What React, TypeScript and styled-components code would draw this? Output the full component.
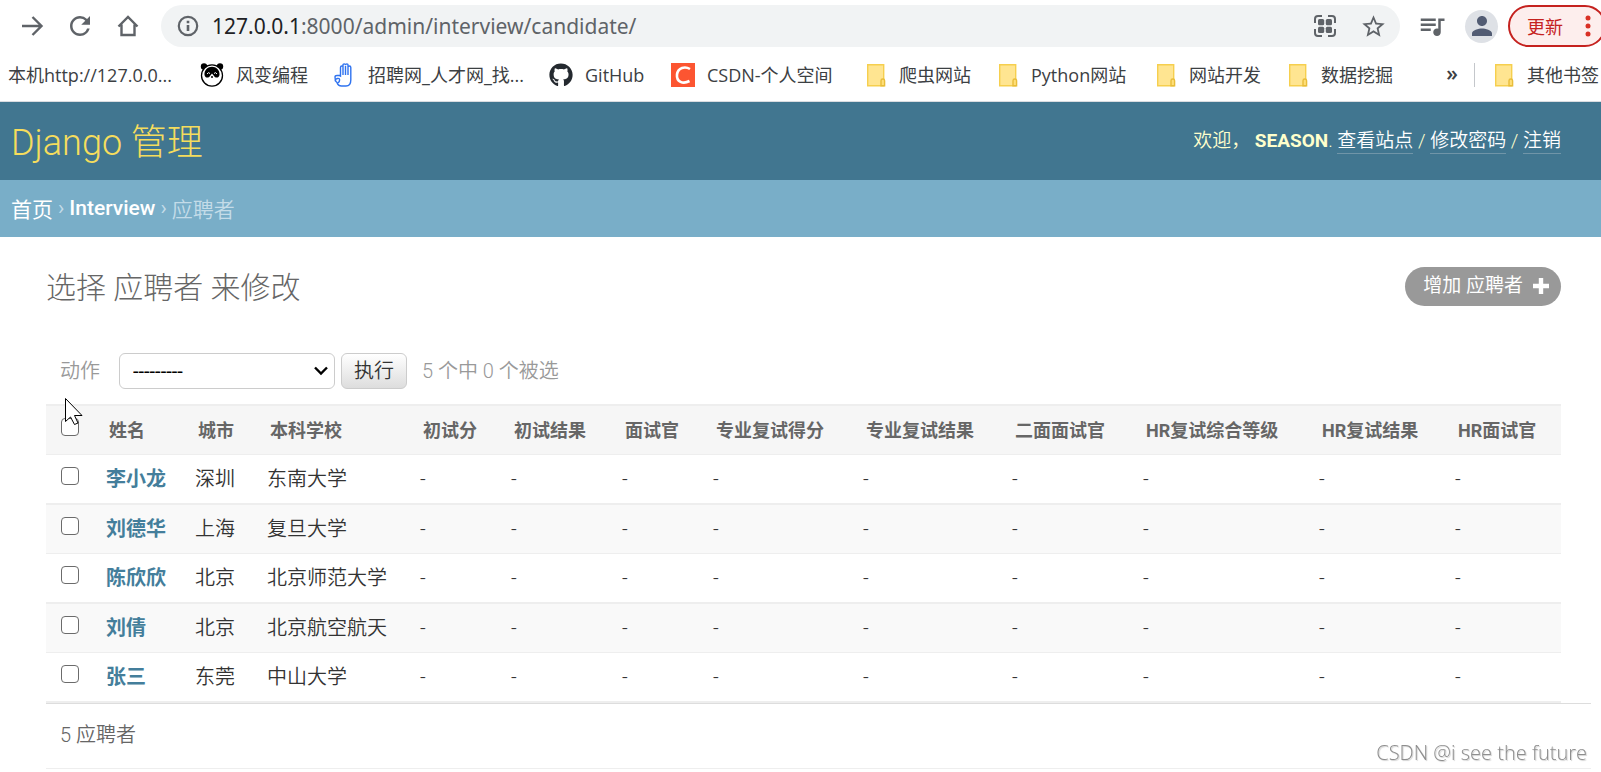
import React from "react";
import styled, { createGlobalStyle } from "styled-components";
import { FaGithub } from "react-icons/fa";
import { MdPerson, MdQueueMusic, MdRefresh, MdStarBorder } from "react-icons/md";

const uiFont = `"Open Sans", "Noto Sans CJK SC", sans-serif`;
const adminFont = `Roboto, "Noto Sans CJK SC", sans-serif`;

const GlobalStyle = createGlobalStyle`
  * { box-sizing: border-box; }
  body { margin: 0; background: #fff; overflow-x: hidden; }
`;

const Page = styled.div`
  position: relative;
  font-family: ${adminFont};
  color: #333;
`;

/* ---------- browser bars ---------- */

const Browser = styled.div`
  display: flex;
  flex-direction: column;
  overflow: hidden;
  padding-top: 5px;
  height: 102px;
  border-bottom: 1px solid #dadce0;
  font-family: ${uiFont};
`;

const Toolbar = styled.div`
  display: flex;
  align-items: center;
  height: 42px;
  color: #5f6368;
`;

const NavButtons = styled.div`
  display: flex;
  gap: 18px;
  padding: 0 18px 0 17px;
`;

const IconButton = styled.button`
  display: flex;
  align-items: center;
  justify-content: center;
  flex: none;
  width: 30px;
  height: 30px;
  padding: 0;
  border: 0;
  background: none;
  color: inherit;
`;

const MediaButton = styled(IconButton)`
  margin: 0 18px 0 17px;
`;

const Omnibox = styled.div`
  display: flex;
  align-items: center;
  flex: 1;
  height: 42px;
  padding: 0 12px;
  border-radius: 21px;
  background: #f1f3f4;
`;

const Address = styled.div`
  flex: 1;
  margin-left: 9px;
  font-family: "Noto Sans", sans-serif;
  font-size: 21px;
  line-height: 28px;
  white-space: nowrap;
  color: #5f6368;
`;

const Host = styled.span`
  color: #202124;
`;

const OmniboxActions = styled.div`
  display: flex;
  gap: 18px;
`;

const Avatar = styled.button`
  display: flex;
  align-items: center;
  justify-content: center;
  flex: none;
  width: 33px;
  height: 33px;
  margin-right: 10px;
  padding: 0;
  border: 0;
  border-radius: 50%;
  background: #dee1e6;
  color: #525c73;
`;

const UpdateButton = styled.button`
  display: flex;
  align-items: center;
  justify-content: space-between;
  flex: none;
  width: 98px;
  height: 42px;
  margin-right: -5px;
  padding: 0 13px 0 17px;
  border: 2px solid #c5221f;
  border-radius: 21px;
  background: #fdeeed;
  color: #c5221f;
  font-family: ${uiFont};
  font-size: 18px;
`;

const Bookmarks = styled.nav`
  display: flex;
  align-items: center;
  flex: 1;
  gap: 24px;
  padding: 2px 0 0 8px;
  color: #3c4043;
`;

const Bookmark = styled.a<{ $label: number }>`
  display: grid;
  grid-template-columns: ${(p) => (p.$label ? `24px ${p.$label}px` : "168px")};
  align-items: center;
  column-gap: 12px;
  flex: none;
  font-size: 18px;
  line-height: 24px;
  white-space: nowrap;
  color: inherit;
  text-decoration: none;
`;

const OtherBookmarks = styled.div`
  display: flex;
  align-items: center;
  flex: none;
  gap: 16px;
  margin: 0 2px 0 auto;
`;

const MoreButton = styled.button`
  padding: 0 0 4px;
  border: 0;
  background: none;
  color: inherit;
  font-family: ${uiFont};
  font-size: 21px;
  font-weight: 600;
  line-height: 24px;
`;

const Divider = styled.span`
  width: 1px;
  height: 24px;
  background: #c4c7cb;
`;

/* ---------- admin header ---------- */

const Header = styled.header`
  display: flex;
  align-items: center;
  justify-content: space-between;
  height: 78px;
  padding: 0 40px 0 11px;
  background: #417690;
  color: #ffc;
`;

const SiteName = styled.h1`
  margin: 0;
  padding-top: 4px;
  font-size: 36px;
  font-weight: 300;
  line-height: 42px;
`;

const SiteLink = styled.a`
  color: #f5dd5d;
  text-decoration: none;
`;

const UserTools = styled.div`
  font-size: 19px;
  line-height: 24px;
  font-weight: 350;
  white-space: pre;
`;

const UserName = styled.strong`
  font-weight: 700;
`;

const ToolLink = styled.a`
  display: inline-block;
  border-bottom: 1px solid #7095a8;
  color: #fff;
  text-decoration: none;
`;

const Breadcrumbs = styled.nav`
  display: flex;
  align-items: center;
  gap: 5px;
  height: 57px;
  padding: 0 11px 2px;
  background: #79aec8;
  color: #c4dce8;
  font-size: 21px;
  font-weight: 350;
`;

const Crumb = styled.a`
  color: #fff;
  font-weight: 400;
  text-decoration: none;
`;

const AppCrumb = styled(Crumb)`
  font-weight: 500;
`;

const CrumbMark = styled.span`
  font-weight: 400;
`;

/* ---------- change list ---------- */

const Content = styled.main`
  padding: 30px 40px 0 46px;
`;

const TitleRow = styled.div`
  display: flex;
  align-items: center;
  justify-content: space-between;
  height: 39px;
  margin-bottom: 47px;
`;

const Title = styled.h2`
  margin: 0;
  padding-top: 2px;
  font-size: 30px;
  font-weight: 300;
  line-height: 36px;
  color: #666;
`;

const AddLink = styled.a`
  display: flex;
  align-items: center;
  justify-content: space-between;
  gap: 10px;
  height: 39px;
  padding: 0 12px 2px 18px;
  border-radius: 20px;
  background: #999;
  color: #fff;
  font-size: 19px;
  line-height: 24px;
  text-decoration: none;
`;

const Actions = styled.form`
  display: flex;
  align-items: center;
  height: 36px;
  margin-bottom: 15px;
  padding-left: 14px;
  font-size: 20px;
  font-weight: 350;
  color: #999;
`;

const ActionLabel = styled.label`
  width: 59px;
  padding-bottom: 4px;
`;

const SelectWrap = styled.div`
  display: grid;
  align-items: center;
  width: 216px;
  height: 36px;
  margin-right: 6px;

  & > * { grid-area: 1 / 1; }
  & > svg { justify-self: end; margin-right: 7px; pointer-events: none; }
`;

const Select = styled.select`
  appearance: none;
  width: 100%;
  height: 36px;
  padding: 0 30px 0 13px;
  border: 1px solid #ccc;
  border-radius: 6px;
  background: #fff;
  color: #000;
  font-family: ${adminFont};
  font-size: 20px;
`;

const RunButton = styled.button`
  width: 66px;
  height: 36px;
  padding: 0 0 4px;
  border: 1px solid #ccc;
  border-radius: 6px;
  background: linear-gradient(#fff, #ddd);
  color: #333;
  font-family: ${adminFont};
  font-size: 20px;
  font-weight: 350;
`;

const Counter = styled.span`
  margin-left: 15px;
  padding-bottom: 4px;
`;

const Table = styled.table`
  width: 100%;
  table-layout: fixed;
  border-spacing: 0;
  border-collapse: separate;
  white-space: nowrap;
`;

const HeadCell = styled.th`
  height: 51px;
  padding: 2px 15px 0;
  border-top: 2px solid #eee;
  border-bottom: 1px solid #eee;
  background: #f6f6f6;
  color: #666;
  font-size: 18px;
  font-weight: 700;
  line-height: 24px;
  text-align: left;
`;

const Row = styled.tr`
  height: 50px;
  font-size: 20px;
  font-weight: 350;
  line-height: 24px;

  & > * {
    padding: 0 12px;
    border-bottom: 2px solid #eee;
    text-align: left;
  }
  &:nth-child(even) { height: 49px; background: #f9f9f9; }
  &:nth-child(even) > * { border-bottom-width: 1px; }
`;

const Cell = styled.td``;

const NameCell = styled.th`
  font-weight: 700;
`;

const NameLink = styled.a`
  color: #447e9b;
  text-decoration: none;
`;

const Check = styled.input`
  appearance: none;
  display: block;
  width: 18px;
  height: 18px;
  margin: 0 0 6px 3px;
  border: 1px solid #6b6b6b;
  border-radius: 4px;
  background: #fff;
`;

const HeadCheck = styled(Check)`
  margin: 0 0 8px 0;
`;

const Paginator = styled.p`
  height: 66px;
  margin: 0 -30px 0 0;
  padding: 0 14px;
  border-top: 1px solid #ddd;
  border-bottom: 1px solid #eee;
  font-size: 20px;
  font-weight: 350;
  line-height: 62px;
  color: #666;
`;

/* ---------- overlays ---------- */

const Pointer = styled.svg`
  position: absolute;
  left: 65px;
  top: 397px;
`;

const Watermark = styled.div`
  position: fixed;
  right: 14px;
  bottom: 5px;
  font-family: ${uiFont};
  font-size: 20px;
  line-height: 28px;
  font-weight: 300;
  color: #8e8e8e;
  text-shadow: 1px 1px 1px #d0d0d0;
`;

/* ---------- icons ---------- */

const ForwardIcon = () => (
  <svg width="30" height="30" viewBox="0 0 30 30" fill="none" stroke="currentColor" strokeWidth="2.4">
    <path d="M5 15h19M15.5 6l9 9-9 9" />
  </svg>
);

const HomeIcon = () => (
  <svg width="30" height="30" viewBox="0 0 30 30" fill="none" stroke="currentColor" strokeWidth="2.4">
    <path d="M5.5 15.5 15 6l9.500 9.500M8.500 13.500V24h13V13.500" />
  </svg>
);

const InfoIcon = () => (
  <svg width="30" height="30" viewBox="0 0 30 30" fill="none" stroke="currentColor" strokeWidth="2.2">
    <circle cx="15" cy="15" r="9.200" />
    <path d="M15 14v6M15 9.800v2.400" strokeWidth="2.600" />
  </svg>
);

const QrIcon = () => (
  <svg width="30" height="30" viewBox="0 0 30 30" fill="none" stroke="currentColor" strokeWidth="2">
    <path d="M12 5H8a3 3 0 0 0-3 3v4M18 5h4a3 3 0 0 1 3 3v4M12 25H8a3 3 0 0 1-3-3v-4M18 25h4a3 3 0 0 0 3-3v-4" />
    <g fill="currentColor" stroke="none">
      <rect x="8" y="8" width="6.200" height="6.200" rx="1.500" />
      <rect x="15.800" y="8" width="6.200" height="6.200" rx="1.500" />
      <rect x="8" y="15.800" width="6.200" height="6.200" rx="1.500" />
      <rect x="15.800" y="15.800" width="6.200" height="6.200" rx="1.500" />
    </g>
  </svg>
);

const DotsIcon = () => (
  <svg width="6" height="24" viewBox="0 0 6 24" fill="#d93025">
    <circle cx="3" cy="4" r="2.500" />
    <circle cx="3" cy="12" r="2.500" />
    <circle cx="3" cy="20" r="2.500" />
  </svg>
);

const PandaIcon = () => (
  <svg width="24" height="24" viewBox="0 0 24 24">
    <circle cx="4" cy="3.500" r="3.200" fill="#000" />
    <circle cx="20" cy="3.500" r="3.200" fill="#000" />
    <ellipse cx="12" cy="12.500" rx="10.500" ry="10.700" fill="#fff" stroke="#000" strokeWidth="1.300" />
    <path d="M4.500 12C4 7 8 3.800 12 3.800S20 7 19.500 12c-.5 3-4 3.500-5.500 1l-2-2.500-2 2.500c-1.500 2.500-5 2-5.500-1z" fill="#000" />
    <path d="M7 11q1.500-2.500 3-.5M14 10.500q1.500-2 3 .5" stroke="#fff" fill="none" />
    <circle cx="12" cy="14" r="1" fill="#000" />
  </svg>
);

const HandIcon = () => (
  <svg width="24" height="24" viewBox="0 0 24 24" fill="#fff" stroke="#2f73f0" strokeWidth="1.400">
    <path d="M8.500 13V4.500Q8.500 3 9.800 3T11 4V2.200Q11 .900 12.200.900T13.500 2.200V2Q13.500.900 14.800.900T16 2.200V4q0-1 1.400-1t1.400 1.500V17q0 6-4.800 6H9.500Q6 23 5 19.500L3.500 18l-.5-4q0-1.500 2-1.500h2.500z" />
    <path d="M11 4v8M13.500 3v9M16 4v8M3.500 18q-.5-2 2-2.500t2 2-2 2" fill="none" />
  </svg>
);

const CsdnIcon = () => (
  <svg width="24" height="24" viewBox="0 0 24 24">
    <path fill="#fc5531" d="M0 0h24v24H0z" />
    <path d="M19 6C14 3 7 4.500 6 11.500c-.7 7.500 6 10 12.500 6.500" fill="none" stroke="#fff" strokeWidth="2.600" />
  </svg>
);

const FolderIcon = () => (
  <svg width="24" height="24" viewBox="0 0 24 24" stroke="#f6cf4e" strokeWidth="1.400">
    <path d="M4.700 1.700h16v21h-16z" fill="#ffe591" />
    <path d="M18 22.700v-5q0-1.700 1.800-1.700t1.800 1.700v5z" fill="#ffdf78" stroke="#e8bd3a" />
  </svg>
);

const PlusIcon = () => (
  <svg width="16" height="16" viewBox="0 0 16 16" stroke="#fff" strokeWidth="4.400">
    <path d="M8 0v16M0 8h16" />
  </svg>
);

const ChevronIcon = () => (
  <svg width="14" height="10" viewBox="0 0 14 10" fill="none" stroke="#000" strokeWidth="2.400">
    <path d="M1 1.500l6 6 6-6" />
  </svg>
);

/* ---------- data ---------- */

const bookmarks: { label: string; width: number; icon?: React.ReactNode }[] = [
  { label: "本机http://127.0.0...", width: 0 },
  { label: "风变编程", width: 72, icon: <PandaIcon /> },
  { label: "招聘网_人才网_找...", width: 157, icon: <HandIcon /> },
  { label: "GitHub", width: 62, icon: <FaGithub size={24} color="#24292f" /> },
  { label: "CSDN-个人空间", width: 132, icon: <CsdnIcon /> },
  { label: "爬虫网站", width: 72, icon: <FolderIcon /> },
  { label: "Python网站", width: 98, icon: <FolderIcon /> },
  { label: "网站开发", width: 72, icon: <FolderIcon /> },
  { label: "数据挖掘", width: 72, icon: <FolderIcon /> },
];

const columns = [
  { title: "姓名", width: 89 },
  { title: "城市", width: 72 },
  { title: "本科学校", width: 153 },
  { title: "初试分", width: 91 },
  { title: "初试结果", width: 111 },
  { title: "面试官", width: 91 },
  { title: "专业复试得分", width: 150 },
  { title: "专业复试结果", width: 149 },
  { title: "二面面试官", width: 131 },
  { title: "HR复试综合等级", width: 176 },
  { title: "HR复试结果", width: 136 },
  { title: "HR面试官", width: 118 },
];

const candidates = [
  { name: "李小龙", city: "深圳", school: "东南大学" },
  { name: "刘德华", city: "上海", school: "复旦大学" },
  { name: "陈欣欣", city: "北京", school: "北京师范大学" },
  { name: "刘倩", city: "北京", school: "北京航空航天" },
  { name: "张三", city: "东莞", school: "中山大学" },
];

export default function App() {
  return (
    <Page>
      <GlobalStyle />
      <Browser>
        <Toolbar>
          <NavButtons>
            <IconButton aria-label="前进"><ForwardIcon /></IconButton>
            <IconButton aria-label="刷新"><MdRefresh size={30} /></IconButton>
            <IconButton aria-label="主页"><HomeIcon /></IconButton>
          </NavButtons>
          <Omnibox>
            <IconButton aria-label="网站信息"><InfoIcon /></IconButton>
            <Address><Host>127.0.0.1</Host>:8000/admin/interview/candidate/</Address>
            <OmniboxActions>
              <IconButton aria-label="二维码"><QrIcon /></IconButton>
              <IconButton aria-label="收藏"><MdStarBorder size={27} /></IconButton>
            </OmniboxActions>
          </Omnibox>
          <MediaButton aria-label="媒体"><MdQueueMusic size={30} /></MediaButton>
          <Avatar aria-label="用户"><MdPerson size={30} /></Avatar>
          <UpdateButton>更新<DotsIcon /></UpdateButton>
        </Toolbar>
        <Bookmarks>
          {bookmarks.map((b) => (
            <Bookmark href="#" key={b.label} $label={b.width}>
              {b.icon}
              <span>{b.label}</span>
            </Bookmark>
          ))}
          <OtherBookmarks>
            <MoreButton>»</MoreButton>
            <Divider />
            <Bookmark href="#" $label={72}>
              <FolderIcon />
              <span>其他书签</span>
            </Bookmark>
          </OtherBookmarks>
        </Bookmarks>
      </Browser>

      <Header>
        <SiteName><SiteLink href="#">Django 管理</SiteLink></SiteName>
        <UserTools>
          欢迎， <UserName>SEASON</UserName>. <ToolLink href="#">查看站点</ToolLink> / <ToolLink href="#">修改密码</ToolLink> / <ToolLink href="#">注销</ToolLink>
        </UserTools>
      </Header>
      <Breadcrumbs>
        <Crumb href="#">首页</Crumb>
        <CrumbMark>›</CrumbMark>
        <AppCrumb href="#">Interview</AppCrumb>
        <CrumbMark>›</CrumbMark>
        <span>应聘者</span>
      </Breadcrumbs>

      <Content>
        <TitleRow>
          <Title>选择 应聘者 来修改</Title>
          <AddLink href="#">增加 应聘者<PlusIcon /></AddLink>
        </TitleRow>
        <Actions>
          <ActionLabel htmlFor="action">动作</ActionLabel>
          <SelectWrap>
            <Select id="action" defaultValue="">
              <option value="">---------</option>
            </Select>
            <ChevronIcon />
          </SelectWrap>
          <RunButton type="button">执行</RunButton>
          <Counter>5 个中 0 个被选</Counter>
        </Actions>
        <Table>
          <colgroup>
            <col width={48} />
            {columns.map((c) => <col key={c.title} width={c.width} />)}
          </colgroup>
          <thead>
            <tr>
              <HeadCell scope="col"><HeadCheck type="checkbox" aria-label="全选" /></HeadCell>
              {columns.map((c) => <HeadCell scope="col" key={c.title}>{c.title}</HeadCell>)}
            </tr>
          </thead>
          <tbody>
            {candidates.map((c) => (
              <Row key={c.name}>
                <Cell><Check type="checkbox" aria-label={c.name} /></Cell>
                <NameCell scope="row"><NameLink href="#">{c.name}</NameLink></NameCell>
                <Cell>{c.city}</Cell>
                <Cell>{c.school}</Cell>
                {columns.slice(3).map((col) => <Cell key={col.title}>-</Cell>)}
              </Row>
            ))}
          </tbody>
        </Table>
        <Paginator>5 应聘者</Paginator>
      </Content>

      <Pointer width="20" height="30" viewBox="0 0 20 30" fill="#fff" stroke="#000" strokeWidth="1">
        <path d="M.5 1.500v23l5-4.500 4 7.500 3.500-1.500-3.500-7.500h7.500z" />
      </Pointer>
      <Watermark>CSDN @i see the future</Watermark>
    </Page>
  );
}
